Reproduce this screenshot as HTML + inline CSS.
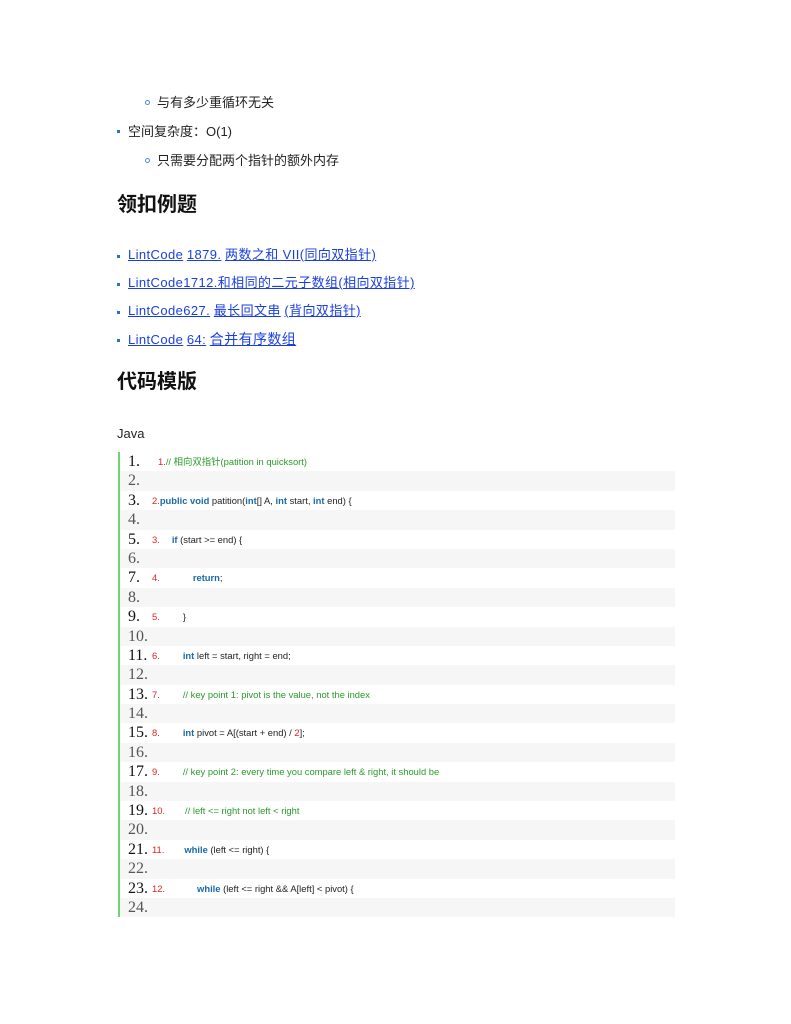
<!DOCTYPE html>
<html><head><meta charset="utf-8"><style>
*{margin:0;padding:0;box-sizing:border-box}
body{width:791px;height:1024px;background:#fff;position:relative;font-family:"Liberation Sans","Noto Sans CJK SC",sans-serif;color:#222;overflow:hidden}
.t{position:absolute;white-space:nowrap;font-size:13px;line-height:16px}
.sq{position:absolute;width:3px;height:3px;background:#2a6fd6}
.ci{position:absolute;width:5px;height:5px;border:1px solid #4a86e0;border-radius:50%}
h2{position:absolute;font-size:20px;font-weight:bold;line-height:24px;color:#111;white-space:nowrap}
a{color:#1a3fe0;text-decoration:underline;letter-spacing:0.4px}
.code{position:absolute;left:118px;top:452px;width:557px;border-left:2px solid #6fd46f}
.row{height:19.4px;position:relative;white-space:nowrap}
.row:nth-child(even){background:#f6f6f6}
.n{position:absolute;left:8px;top:0;font-family:"Liberation Serif",serif;font-size:16px;line-height:19px;color:#111}
.row:nth-child(even) .n{color:#555}
.c{position:absolute;top:4px;font-size:9.4px;line-height:11px;color:#222}
.r{color:#d22}.k{color:#1a6aa8;font-weight:bold}.g{color:#2a9a2a}
</style></head><body>
<div class="ci" style="left:145px;top:100px"></div><div class="t" style="left:157px;top:95px">与有多少重循环无关</div>
<div class="sq" style="left:117px;top:130px"></div><div class="t" style="left:128px;top:124px">空间复杂度：O(1)</div>
<div class="ci" style="left:145px;top:158px"></div><div class="t" style="left:157px;top:153px">只需要分配两个指针的额外内存</div>
<h2 style="left:117px;top:193px">领扣例题</h2>
<div class="sq" style="left:117px;top:255px"></div><div class="t" style="left:128px;top:247px"><a>LintCode</a> <a>1879.</a> <a>两数之和 VII(同向双指针)</a></div>
<div class="sq" style="left:117px;top:283px"></div><div class="t" style="left:128px;top:275px"><a>LintCode1712.和相同的二元子数组(相向双指针)</a></div>
<div class="sq" style="left:117px;top:311px"></div><div class="t" style="left:128px;top:303px"><a>LintCode627.</a> <a>最长回文串</a> <a>(背向双指针)</a></div>
<div class="sq" style="left:117px;top:339px"></div><div class="t" style="left:128px;top:331px"><a>LintCode</a> <a>64:</a> <a style="font-size:14px">合并有序数组</a></div>
<h2 style="left:117px;top:370px">代码模版</h2>
<div class="t" style="left:117px;top:426px">Java</div>
<div class="code">
<div class="row"><span class="n">1.</span><span class="c" style="left:38px"><span class="r">1.</span><span class="g">// 相向双指针(patition in quicksort)</span></span></div>
<div class="row"><span class="n">2.</span></div>
<div class="row"><span class="n">3.</span><span class="c" style="left:32px"><span class="r">2.</span><span class="k">public void</span> patition(<span class="k">int</span>[] A, <span class="k">int</span> start, <span class="k">int</span> end) {</span></div>
<div class="row"><span class="n">4.</span></div>
<div class="row"><span class="n">5.</span><span class="c" style="left:32px"><span class="r">3.</span><span style="display:inline-block;width:12px"></span><span class="k">if</span> (start &gt;= end) {</span></div>
<div class="row"><span class="n">6.</span></div>
<div class="row"><span class="n">7.</span><span class="c" style="left:32px"><span class="r">4.</span><span style="display:inline-block;width:33px"></span><span class="k">return</span>;</span></div>
<div class="row"><span class="n">8.</span></div>
<div class="row"><span class="n">9.</span><span class="c" style="left:32px"><span class="r">5.</span><span style="display:inline-block;width:23px"></span>}</span></div>
<div class="row"><span class="n">10.</span></div>
<div class="row"><span class="n">11.</span><span class="c" style="left:32px"><span class="r">6.</span><span style="display:inline-block;width:23px"></span><span class="k">int</span> left = start, right = end;</span></div>
<div class="row"><span class="n">12.</span></div>
<div class="row"><span class="n">13.</span><span class="c" style="left:32px"><span class="r">7.</span><span style="display:inline-block;width:23px"></span><span class="g">// key point 1: pivot is the value, not the index</span></span></div>
<div class="row"><span class="n">14.</span></div>
<div class="row"><span class="n">15.</span><span class="c" style="left:32px"><span class="r">8.</span><span style="display:inline-block;width:23px"></span><span class="k">int</span> pivot = A[(start + end) / <span class="r">2</span>];</span></div>
<div class="row"><span class="n">16.</span></div>
<div class="row"><span class="n">17.</span><span class="c" style="left:32px"><span class="r">9.</span><span style="display:inline-block;width:23px"></span><span class="g">// key point 2: every time you compare left &amp; right, it should be</span></span></div>
<div class="row"><span class="n">18.</span></div>
<div class="row"><span class="n">19.</span><span class="c" style="left:32px"><span class="r">10.</span><span style="display:inline-block;width:20px"></span><span class="g">// left &lt;= right not left &lt; right</span></span></div>
<div class="row"><span class="n">20.</span></div>
<div class="row"><span class="n">21.</span><span class="c" style="left:32px"><span class="r">11.</span><span style="display:inline-block;width:20px"></span><span class="k">while</span> (left &lt;= right) {</span></div>
<div class="row"><span class="n">22.</span></div>
<div class="row"><span class="n">23.</span><span class="c" style="left:32px"><span class="r">12.</span><span style="display:inline-block;width:32px"></span><span class="k">while</span> (left &lt;= right &amp;&amp; A[left] &lt; pivot) {</span></div>
<div class="row"><span class="n">24.</span></div>
</div>
</body></html>
